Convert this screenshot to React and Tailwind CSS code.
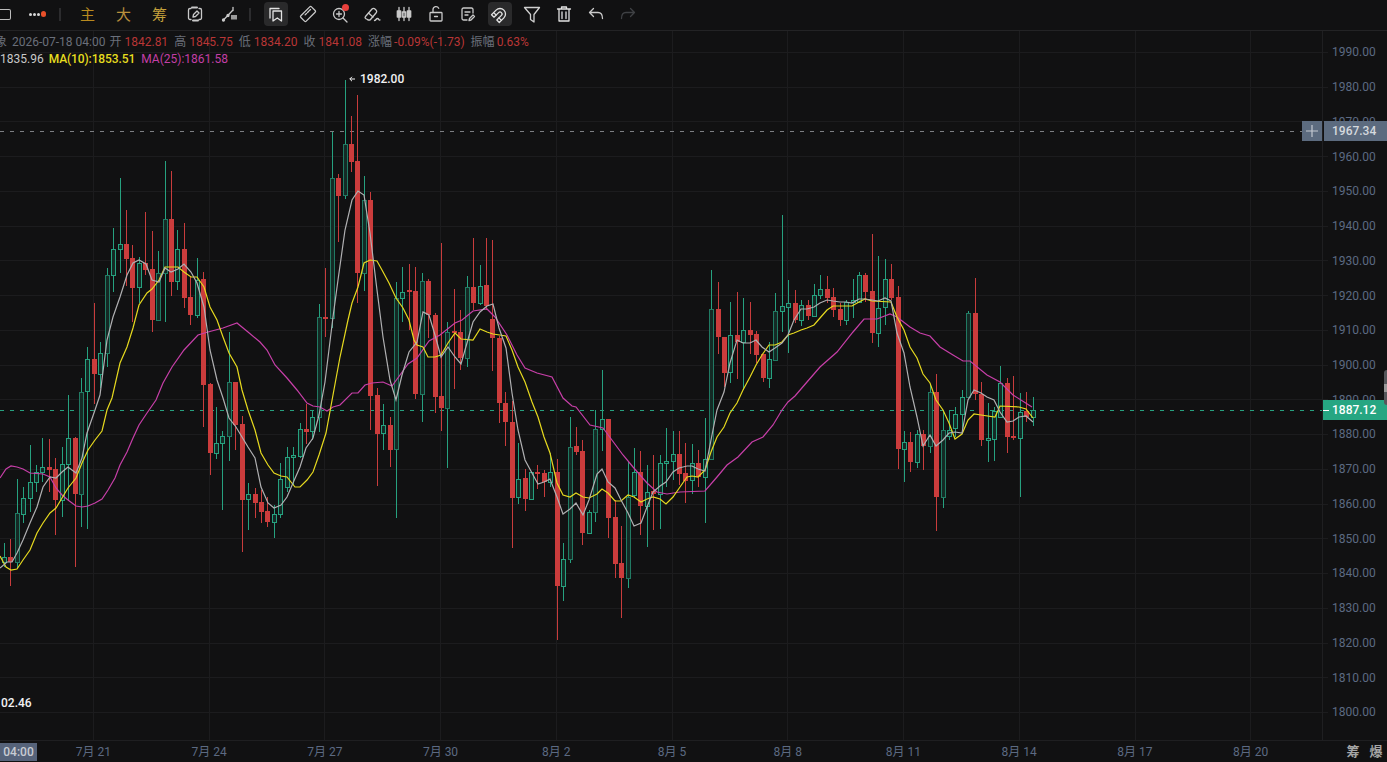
import React from 'react';

const UP = '#26a17f';
const DOWN = '#cb3c3c';

// candles in screen px: [wickTop, bodyTop, bodyBottom, wickBottom, isRed]
const CANDLES = [
  [543, 557, 562, 567, 0], [539, 557, 562, 586, 1], [479, 513, 562, 568, 0], [487, 498, 514, 523, 0],
  [445, 482, 498, 512, 0], [465, 472, 482, 492, 0], [438, 467, 472, 482, 0], [439, 467, 470, 492, 1],
  [458, 469, 500, 535, 1], [447, 464, 500, 517, 0], [395, 438, 464, 500, 0], [437, 438, 494, 567, 1],
  [378, 392, 494, 527, 0], [347, 359, 391, 529, 0], [303, 359, 374, 404, 1], [342, 353, 374, 388, 0],
  [268, 275, 353, 367, 0], [228, 249, 275, 292, 0], [178, 244, 249, 273, 0], [210, 244, 259, 286, 1],
  [245, 258, 288, 322, 1], [257, 263, 287, 303, 0], [212, 263, 270, 275, 1], [231, 269, 320, 332, 1],
  [251, 273, 320, 321, 0], [161, 219, 273, 322, 0], [171, 219, 282, 296, 1], [230, 249, 281, 290, 0],
  [223, 249, 298, 308, 1], [277, 297, 315, 325, 1], [258, 280, 315, 318, 0], [272, 279, 385, 427, 1],
  [383, 384, 453, 475, 1], [407, 443, 453, 459, 0], [431, 436, 443, 510, 0], [332, 382, 436, 461, 0],
  [382, 382, 425, 450, 1], [416, 424, 500, 552, 1], [483, 494, 499, 530, 0], [488, 494, 503, 518, 1],
  [490, 502, 512, 523, 1], [497, 511, 522, 527, 1], [505, 514, 522, 538, 0], [463, 479, 514, 518, 0],
  [447, 457, 487, 492, 0], [447, 455, 457, 485, 0], [423, 429, 456, 458, 0], [404, 429, 432, 444, 1],
  [410, 417, 431, 440, 0], [304, 317, 417, 432, 0], [268, 317, 319, 337, 1], [132, 178, 318, 328, 0],
  [174, 178, 196, 242, 1], [80, 144, 195, 199, 0], [116, 144, 162, 172, 1], [95, 161, 273, 303, 1],
  [176, 200, 273, 291, 0], [192, 200, 396, 430, 1], [388, 395, 434, 486, 1], [404, 425, 433, 450, 0],
  [417, 425, 450, 467, 1], [282, 298, 449, 518, 0], [267, 292, 298, 322, 0], [264, 290, 292, 330, 1],
  [267, 291, 394, 399, 1], [273, 281, 394, 422, 0], [279, 281, 315, 338, 1], [313, 315, 397, 413, 1],
  [243, 396, 408, 431, 1], [322, 332, 408, 468, 0], [289, 331, 333, 389, 1], [310, 332, 358, 370, 1],
  [276, 287, 358, 367, 0], [238, 287, 303, 310, 1], [265, 286, 303, 305, 0], [238, 285, 306, 310, 1],
  [240, 319, 338, 371, 1], [336, 338, 403, 423, 1], [392, 403, 422, 446, 1], [401, 422, 498, 548, 1],
  [443, 479, 497, 504, 0], [469, 478, 499, 511, 1], [472, 472, 499, 499, 0], [465, 472, 474, 489, 1],
  [470, 473, 482, 497, 1], [453, 472, 482, 487, 0], [459, 472, 586, 640, 1], [543, 559, 586, 601, 0],
  [417, 447, 559, 563, 0], [427, 446, 452, 455, 1], [440, 451, 533, 545, 1], [510, 512, 533, 534, 0],
  [410, 429, 512, 522, 0], [370, 419, 429, 451, 0], [419, 419, 518, 538, 1], [500, 517, 564, 578, 1],
  [526, 563, 578, 618, 1], [461, 497, 578, 588, 0], [448, 472, 495, 497, 0], [451, 472, 506, 535, 1],
  [465, 492, 506, 547, 0], [455, 491, 494, 530, 1], [455, 463, 494, 529, 0], [428, 461, 463, 487, 0],
  [431, 454, 461, 480, 0], [431, 454, 474, 485, 1], [443, 473, 481, 503, 1], [444, 463, 480, 494, 0],
  [450, 463, 477, 487, 1], [418, 459, 477, 523, 0], [270, 309, 459, 460, 0], [282, 309, 337, 354, 1],
  [337, 337, 373, 387, 1], [302, 335, 372, 383, 0], [292, 335, 342, 379, 1], [298, 330, 342, 390, 0],
  [302, 330, 335, 354, 1], [331, 334, 355, 363, 1], [354, 354, 378, 382, 1], [342, 359, 378, 388, 0],
  [293, 311, 360, 361, 0], [215, 306, 311, 332, 0], [280, 303, 307, 353, 0], [290, 303, 320, 323, 1],
  [300, 305, 320, 326, 0], [300, 305, 316, 320, 1], [284, 295, 316, 317, 0], [275, 289, 295, 299, 0],
  [276, 289, 298, 303, 1], [288, 297, 310, 317, 1], [303, 309, 320, 326, 1], [300, 302, 320, 325, 0],
  [279, 300, 302, 318, 0], [272, 275, 302, 303, 0], [273, 275, 292, 302, 1], [234, 291, 333, 343, 1],
  [256, 308, 333, 347, 0], [259, 279, 307, 325, 0], [264, 279, 298, 300, 1], [286, 297, 449, 469, 1],
  [431, 442, 449, 482, 0], [432, 442, 462, 472, 1], [430, 434, 462, 468, 0], [430, 434, 446, 470, 1],
  [385, 392, 446, 453, 0], [374, 392, 497, 531, 1], [410, 430, 497, 508, 0], [410, 430, 436, 440, 0],
  [407, 414, 428, 437, 0], [390, 397, 414, 432, 0], [311, 313, 397, 398, 0], [278, 313, 394, 400, 1],
  [382, 394, 440, 446, 1], [403, 438, 440, 462, 0], [407, 411, 439, 461, 0], [366, 383, 417, 417, 0],
  [378, 383, 437, 453, 1], [376, 436, 438, 440, 1], [393, 412, 438, 497, 0], [392, 411, 417, 422, 1],
  [397, 410, 417, 426, 0],
];

const MA5 = '0,568 7,562 12,562 17,553 23,540 30,523 37,507 43,487 50,477 56,478 62,472 68,467 76,473 82,458 87,433 95,410 100,395 107,340 113,317 120,297 127,275 133,263 139,260 146,264 152,280 159,282 165,268 171,272 178,269 184,264 191,272 197,283 204,307 210,350 217,380 223,398 229,418 236,427 242,437 248,447 255,458 261,487 268,503 274,508 281,505 287,497 293,483 300,467 306,448 313,438 319,415 325,382 333,317 338,280 345,230 352,200 358,191 364,195 370,233 377,290 383,337 390,380 396,400 402,375 409,352 417,342 423,312 429,315 435,335 441,357 448,347 455,357 461,364 467,343 473,322 480,312 487,306 493,304 499,328 506,348 512,393 518,430 525,460 532,473 538,484 544,482 550,479 557,497 563,514 570,509 576,503 583,515 589,500 597,474 602,469 608,482 615,488 621,500 628,513 634,526 641,523 647,507 653,492 660,486 666,482 673,472 679,468 687,466 692,466 698,469 705,471 711,440 717,410 724,392 730,363 737,340 743,343 750,343 756,340 762,347 769,352 775,348 782,343 788,335 794,320 801,309 807,309 814,307 820,303 827,300 833,301 840,302 846,302 852,303 859,299 865,299 872,300 878,301 885,298 891,301 897,333 904,353 910,387 917,417 923,446 930,435 936,446 943,440 949,433 955,432 962,433 968,400 974,390 981,393 987,397 994,400 1000,412 1007,422 1013,421 1019,417 1026,416 1033,422';

const MA10 = '0,556 6,567 11,570 17,569 23,560 30,550 37,533 43,523 50,513 56,508 62,498 68,488 76,478 82,463 88,450 95,440 102,431 107,410 112,398 120,363 127,347 133,328 139,305 147,293 152,289 159,280 165,267 178,267 184,272 191,277 197,277 204,287 210,307 217,320 223,337 229,353 237,367 242,390 248,410 255,430 261,453 268,465 274,473 281,476 287,477 295,487 300,487 307,480 313,472 319,455 326,433 333,395 340,357 348,320 352,303 358,287 364,263 370,260 377,261 382,270 389,283 396,298 403,308 409,320 414,340 417,345 423,347 428,357 435,357 441,355 448,343 455,333 461,339 473,340 480,329 487,332 493,334 506,336 512,350 518,367 525,382 532,402 538,417 544,437 550,453 557,483 563,495 570,497 576,493 583,497 589,498 597,494 602,489 608,493 615,501 621,501 628,495 634,497 641,502 647,499 653,497 660,499 666,504 673,497 680,487 687,477 692,476 698,477 705,470 711,452 717,437 724,427 730,413 737,403 743,390 750,377 756,365 762,355 769,345 775,345 782,342 788,335 794,333 801,330 807,328 814,325 820,318 827,310 833,306 852,306 859,302 865,299 872,301 891,302 897,317 904,330 910,347 917,358 923,374 930,383 936,400 943,410 949,423 955,439 962,434 968,420 974,414 981,415 995,417 1000,406 1019,407 1026,409 1033,418';

const MA25 = '0,478 6,469 11,466 17,467 23,469 30,473 43,474 50,477 56,488 62,495 68,500 76,506 82,507 88,506 95,503 102,499 108,490 115,478 120,465 127,452 133,438 139,425 147,413 156,400 163,383 172,367 184,350 198,335 208,332 223,328 237,323 248,332 260,342 267,350 275,365 287,378 297,390 307,403 313,406 320,407 327,411 333,407 340,405 352,393 358,393 365,385 372,383 383,382 392,386 400,375 408,364 417,358 429,341 440,335 455,323 462,320 473,311 487,309 495,317 507,335 517,355 525,368 537,373 552,377 563,398 572,406 576,407 590,425 603,428 623,455 633,467 647,483 657,492 667,494 680,492 705,491 717,477 727,465 738,457 752,442 763,437 773,425 782,410 788,402 795,396 807,382 820,367 837,352 853,332 864,319 877,319 890,314 897,317 910,327 920,333 930,336 940,347 953,355 963,361 970,361 987,375 1000,382 1013,395 1032,407';

const PRICES = ['1990.00', '1980.00', '1970.00', '1960.00', '1950.00', '1940.00', '1930.00', '1920.00', '1910.00', '1900.00', '1890.00', '1880.00', '1870.00', '1860.00', '1850.00', '1840.00', '1830.00', '1820.00', '1810.00', '1800.00'];
const DATES = ['7月 21', '7月 24', '7月 27', '7月 30', '8月 2', '8月 5', '8月 8', '8月 11', '8月 14', '8月 17', '8月 20'];

function Icon({ children, className = 'text-[#c9c9c9]' }) {
  return (
    <svg width="20" height="20" viewBox="0 0 20 20" fill="none" stroke="currentColor" strokeWidth="1.3" strokeLinecap="round" strokeLinejoin="round" className={className}>
      {children}
    </svg>
  );
}

function Tool({ active, children }) {
  return (
    <div className={`flex h-6 w-6 shrink-0 items-center justify-center rounded ${active ? 'bg-[#2a2a2b]' : ''}`}>
      {children}
    </div>
  );
}

function Toolbar() {
  return (
    <div className="flex h-[31px] shrink-0 items-center overflow-hidden border-b border-[#232325] pb-[2px]">
      <div className="ml-[-2px] h-[11px] w-[13px] shrink-0 rounded-[2px] border-[1.5px] border-l-0 border-[#bdbdbd]" />
      <div className="ml-[18px] flex w-[17px] shrink-0 items-center gap-[1.5px]">
        <i className="h-[3px] w-[3px] rounded-full bg-[#d8d8d8]" />
        <i className="h-[3px] w-[3px] rounded-full bg-[#d8d8d8]" />
        <i className="h-[3px] w-[3px] rounded-full bg-[#d8d8d8]" />
        <i className="h-[6px] w-[6px] rounded-full bg-[#e8502a]" />
      </div>
      <div className="ml-[13px] h-[13px] w-[2px] shrink-0 bg-[#2c2c2e]" />
      <span className="ml-[19px] mt-[2px] w-[16px] text-[15px] leading-none text-[#b98a1f]">主</span>
      <span className="ml-[20px] mt-[2px] w-[16px] text-[15px] leading-none text-[#b98f3c]">大</span>
      <span className="ml-[20px] mt-[2px] w-[16px] text-[15px] leading-none text-[#c4a13c]">筹</span>
      <div className="ml-[15px] flex w-[24px] justify-center">
        <Icon>
          <path d="M6 4.500H5a1.500 1.500 0 0 0-1.500 1.500v8A1.500 1.500 0 0 0 5 15.500h1M14 4.500h1A1.500 1.500 0 0 1 16.500 6v8a1.500 1.500 0 0 1-1.500 1.500h-1" />
          <path d="M7 3.500h5M8 16.500h5" strokeWidth="2" />
          <path d="M8 13l.5-2.500 3.500-3.500 2 2-3.500 3.500L8 13z" />
        </Icon>
      </div>
      <div className="ml-[11px] flex w-[24px] justify-center">
        <Icon>
          <path d="M3 16.500L12.500 6.500" />
          <circle cx="3.500" cy="16" r="1" fill="currentColor" />
          <circle cx="8" cy="11.500" r="1" fill="currentColor" />
          <path d="M13 3.500v3" />
          <rect x="11" y="11" width="6" height="4.500" fill="currentColor" stroke="none" opacity=".75" />
        </Icon>
      </div>
      <div className="ml-[7px] h-[13px] w-[2px] shrink-0 bg-[#2c2c2e]" />
      <div className="ml-[13px] flex items-center gap-[8px]">
        <Tool active>
          <Icon className="text-[#e2e2e2]">
            <path d="M4 14V4.500h9" />
            <path d="M7 7h8.500v10l-4.200-3-4.300 3V7z" />
          </Icon>
        </Tool>
        <Tool>
          <Icon>
            <rect x="6.200" y="2.500" width="7.600" height="15" rx="1.200" transform="rotate(45 10 10)" />
            <path d="M12.500 5.500l-1.400 1.400M10.500 7.500l-1 1M8.500 9.500l-1.400 1.400" />
          </Icon>
        </Tool>
        <Tool>
          <div className="relative">
            <Icon>
              <circle cx="9" cy="10" r="5.500" />
              <path d="M13 14l4 4M9 7.500v5M6.500 10h5" />
            </Icon>
            <i className="absolute right-[1px] top-0 h-[7px] w-[7px] rounded-full bg-[#e8403c]" />
          </div>
        </Tool>
        <Tool>
          <Icon>
            <path d="M3.500 12.500L10 5a2 2 0 0 1 3 0l1 1a2 2 0 0 1 0 3l-5.500 6.500a2 2 0 0 1-3 0l-2-1a1.500 1.500 0 0 1 0-2z" />
            <path d="M6.500 9l4.500 4M12.500 16.500c1.500 0 1.500-2 3-2s1 2 2.500 1.500" />
          </Icon>
        </Tool>
        <Tool>
          <Icon>
            <path d="M5 3.500v13M10 3.500v13M15 3.500v13" />
            <rect x="3.300" y="7" width="3.400" height="6" fill="currentColor" />
            <rect x="8.300" y="8" width="3.400" height="5" />
            <rect x="13.300" y="7" width="3.400" height="6" fill="currentColor" />
          </Icon>
        </Tool>
        <Tool>
          <Icon>
            <rect x="4" y="8.500" width="12" height="8.500" rx=".8" />
            <path d="M7 8.500V5.500a3 3 0 0 1 5.700-1.200M8.500 12.500h3" />
          </Icon>
        </Tool>
        <Tool>
          <Icon>
            <path d="M15 9V5.500A1.500 1.500 0 0 0 13.500 4h-8A1.500 1.500 0 0 0 4 5.500v9A1.500 1.500 0 0 0 5.500 16H9" />
            <path d="M7 8h5M7 11h3" />
            <path d="M11 16.500l.5-2 3.500-3.500 1.500 1.500-3.500 3.500-2 .5z" />
          </Icon>
        </Tool>
        <Tool active>
          <Icon className="text-[#e2e2e2]">
            <g transform="rotate(225 10 10)">
              <path d="M4.500 3.500v6.500a5.500 5.500 0 0 0 11 0V3.500h-3.500v6.500a2 2 0 0 1-4 0V3.500z" />
              <path d="M4.500 6.500h3.500M12 6.500h3.500" />
            </g>
          </Icon>
        </Tool>
        <Tool>
          <svg width="20" height="20" viewBox="0 0 20 20" fill="none" stroke="currentColor" strokeWidth="1.3" strokeLinejoin="round" className="text-[#d0d0d0]">
            <path d="M2.500 3.500h15l-5.500 7v7.500l-3.500-2.500v-5l-6-7z" />
          </svg>
        </Tool>
        <Tool>
          <Icon className="text-[#e2e2e2]">
            <path d="M3.500 5h13M7.500 5V3h5v2M5 5v12h10V5M8 8v6.500M12 8v6.500" />
          </Icon>
        </Tool>
        <Tool>
          <Icon>
            <path d="M7.500 4.500L3.500 8.500l4 4M3.500 8.500h8.500c3 0 4.500 2 4.500 6" />
          </Icon>
        </Tool>
        <Tool>
          <Icon className="text-[#3f4144]">
            <path d="M12.500 4.500l4 4-4 4M16.500 8.500H8c-3 0-4.500 2-4.500 6" />
          </Icon>
        </Tool>
      </div>
    </div>
  );
}

function Chart() {
  return (
    <svg width="1387" height="762" className="absolute left-0 top-[-31px]">
      {PRICES.map((p, i) => (
        <rect key={p} x="0" y={Math.round(52 + i * 34.74)} width="1328" height="1" fill="#1c1c1e" />
      ))}
      {DATES.map((d, i) => (
        <rect key={d} x={Math.round(93 + i * 115.73)} y="31" width="1" height="709" fill="#1c1c1e" />
      ))}
      <line x1="0" x2="1302" y1="131.500" y2="131.500" stroke="#7d7f83" strokeDasharray="4 6" />
      <line x1="0" x2="1322" y1="410.500" y2="410.500" stroke={UP} strokeDasharray="4 6" />
      {CANDLES.map(([wt, bt, bb, wb, red], i) => {
        const x = Math.floor(4.3 + 6.43 * i);
        return (
          <g key={i}>
            <rect x={x} y={wt} width="1" height={wb - wt} fill={red ? '#c83c3c' : UP} />
            {red ? (
              <rect x={x - 2} y={bt} width="5" height={Math.max(bb - bt, 2)} fill={DOWN} />
            ) : (
              <rect x={x - 1.5} y={bt + 0.5} width="4" height={Math.max(bb - bt, 2)} fill="#142a25" stroke={bb - bt > 40 ? '#217a63' : UP} />
            )}
          </g>
        );
      })}
      <polyline points={MA25} fill="none" stroke="#c73fa8" strokeWidth="1.2" />
      <polyline points={MA10} fill="none" stroke="#e6d91f" strokeWidth="1.2" />
      <polyline points={MA5} fill="none" stroke="#b0b0b2" strokeWidth="1.2" />
    </svg>
  );
}

export default function App() {
  return (
    <div className="flex h-[762px] w-[1387px] flex-col overflow-hidden bg-[#111112] font-['Roboto','Noto_Sans_CJK_SC',sans-serif] text-[12px]">
      <Toolbar />
      <div className="relative flex min-h-0 flex-1 flex-col">
        <div className="relative flex min-h-0 flex-1">
          <div className="relative flex-1">
            <Chart />
            <div className="relative ml-[-5px] mt-[3px] flex h-[16px] items-center gap-[3px] whitespace-nowrap leading-none text-[#6a6f7a]">
              <span>象</span>
              <span className="ml-[2px]">2026-07-18 04:00</span>
              <span className="ml-[1px]">开</span><span className="text-[#b93636]">1842.81</span>
              <span className="ml-[3px]">高</span><span className="text-[#b93636]">1845.75</span>
              <span className="ml-[3px]">低</span><span className="text-[#b93636]">1834.20</span>
              <span className="ml-[3px]">收</span><span className="text-[#b93636]">1841.08</span>
              <span className="ml-[3px]">涨幅</span><span className="ml-[-1px] text-[#b93636]">-0.09%(-1.73)</span>
              <span className="ml-[3px]">振幅</span><span className="ml-[-1px] text-[#b93636]">0.63%</span>
            </div>
            <div className="relative mt-[1px] flex h-[16px] items-center whitespace-nowrap leading-none">
              <span className="text-[#c9c9c9]">1835.96</span>
              <span className="ml-[5px] font-medium tracking-[-0.1px] text-[#e6dd1f]">MA(10):1853.51</span>
              <span className="ml-[6px] text-[#c23fa6]">MA(25):1861.58</span>
            </div>
            <span className="absolute left-[349px] top-[42px] flex items-center gap-[5px] font-medium leading-none text-[#f2f2f2]">
              <svg width="6" height="6" viewBox="0 0 6 6" fill="none" stroke="currentColor"><path d="M6 3H.8M3 .8L.8 3 3 5.200" /></svg>
              1982.00
            </span>
            <span className="absolute left-[1px] top-[666px] font-medium leading-none text-[#f2f2f2]">02.46</span>
            <div className="absolute left-[1302px] top-[90px] flex h-[20px] w-[20px] items-center justify-center bg-[#5c6b7f] text-[#c4c9d1]">
              <svg width="14" height="14" viewBox="0 0 14 14" stroke="currentColor" strokeWidth="1.2"><path d="M7 1v12M1 7h12" /></svg>
            </div>
          </div>
          <div className="relative flex w-[65px] shrink-0 flex-col border-l border-[#1f1f21] pl-[9px] pt-[4px] text-[#5c6a82]">
            {PRICES.map((p) => (
              <div key={p} className="flex h-[34.74px] shrink-0 items-center leading-none">{p}</div>
            ))}
            <div className="absolute left-[1px] top-[90px] flex h-[20px] w-[63px] items-center bg-[#5c6b7f] pl-[8px] font-medium leading-none text-[#d5d9de]">1967.34</div>
            <div className="absolute left-0 top-[369px] flex h-[20px] w-[64px] items-center bg-[#26a682] pl-[9px] font-medium leading-none text-white">1887.12</div>
            <i className="absolute left-0 top-[379px] h-px w-[6px] bg-white" />
            <div className="absolute right-0 top-[339px] flex h-[35px] w-[3px] items-center rounded-l-sm bg-[#55575b]">
              <i className="h-[8px] w-full bg-[#9a9a9a]" />
            </div>
          </div>
        </div>
        <div className="relative flex h-[22px] shrink-0 items-center border-t border-[#1f1f21] pl-[35.500px] text-[#5c6a82]">
          <div className="absolute left-0 top-[2px] flex h-[18px] w-[37px] items-center justify-center bg-[#56637a] font-medium leading-none text-[#c8ccd3]">04:00</div>
          {DATES.map((d) => (
            <div key={d} className="w-[115.730px] shrink-0 text-center leading-none">{d}</div>
          ))}
          <span className="ml-[38px] text-[13px] font-bold leading-none text-[#a6a6a6]">筹</span>
          <span className="ml-[10px] text-[13px] font-bold leading-none text-[#a6a6a6]">爆</span>
        </div>
      </div>
    </div>
  );
}
